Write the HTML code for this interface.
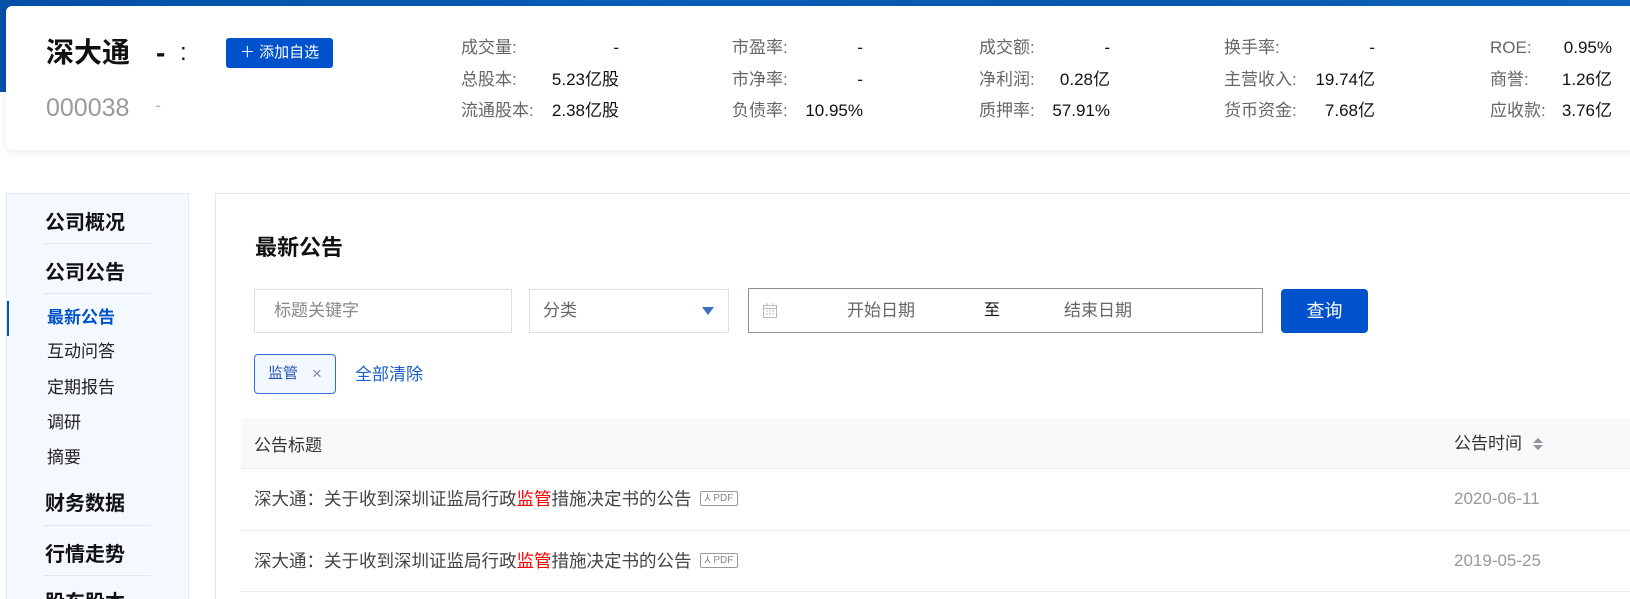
<!DOCTYPE html>
<html><head><meta charset="utf-8"><style>
*{margin:0;padding:0;box-sizing:border-box}
html,body{width:1630px;height:599px;overflow:hidden;background:#fff}
body{font-family:"Liberation Sans","Noto Sans CJK SC",sans-serif}
#w{position:relative;width:1630px;height:599px;overflow:hidden}
.a{position:absolute;white-space:nowrap}
.banner{left:0;top:0;width:1630px;height:92px;background:linear-gradient(90deg,#0550a8,#0a5cb8 40%,#0a58b0 70%,#0e62bd)}
.card{left:6px;top:6px;width:1640px;height:144px;background:#fff;border-radius:6px;box-shadow:0 2px 8px rgba(0,0,0,.08)}
.lb{font-size:17px;color:#666;line-height:20px}
.vl{font-size:17px;color:#111;line-height:20px;text-align:right}
.side{left:6px;top:193px;width:183px;height:420px;background:#f4f8ff;border:1px solid #e4e8ef}
.h{font-size:20px;font-weight:bold;color:#111;left:45px;line-height:24px}
.sep{left:44px;width:107px;height:1px;background:#e3e6ec}
.s{font-size:17px;color:#222;left:47px;line-height:20px}
.panel{left:215px;top:193px;width:1420px;height:420px;border:1px solid #e6e6e6;background:#fff}
.box{border:1px solid #dcdfe6;background:#fff}
.row{font-size:17.5px;color:#444;left:254px;line-height:22px}
.date{font-size:17px;color:#999;left:1454px;line-height:20px}
.pdf{display:inline-block;vertical-align:middle;margin-left:8px;border:1px solid #999;border-radius:2px;font-size:10px;color:#888;line-height:13px;padding:0 4px;height:15px;position:relative;top:-2px}
.line{left:241px;width:1389px;height:1px;background:#ebebf0}
</style></head><body><div id="w">
<div class="a banner"></div>
<div class="a card"></div>
<div class="a" style="left:46px;top:36px;font-size:28px;font-weight:bold;color:#111;line-height:34px">深大通</div>
<div class="a" style="left:156px;top:36px;font-size:28px;font-weight:bold;color:#111;line-height:34px">-</div>
<div class="a" style="left:180px;top:38px;font-size:24px;color:#111;line-height:30px">:</div>
<div class="a" style="left:46px;top:93px;font-size:25px;color:#9a9a9a;line-height:30px">000038</div>
<div class="a" style="left:155px;top:95px;font-size:18px;color:#bbb">-</div>
<div class="a" style="left:226px;top:38px;width:107px;height:30px;background:#0052cc;border-radius:3px;color:#fff;font-size:15px;line-height:30px;text-align:center">＋ 添加自选</div>

<div class="a lb" style="left:461px;top:38px">成交量:</div><div class="a vl" style="left:540px;width:79px;top:38px">-</div>
<div class="a lb" style="left:461px;top:70px">总股本:</div><div class="a vl" style="left:520px;width:99px;top:70px">5.23亿股</div>
<div class="a lb" style="left:461px;top:101px">流通股本:</div><div class="a vl" style="left:520px;width:99px;top:101px">2.38亿股</div>

<div class="a lb" style="left:732px;top:38px">市盈率:</div><div class="a vl" style="left:800px;width:63px;top:38px">-</div>
<div class="a lb" style="left:732px;top:70px">市净率:</div><div class="a vl" style="left:800px;width:63px;top:70px">-</div>
<div class="a lb" style="left:732px;top:101px">负债率:</div><div class="a vl" style="left:780px;width:83px;top:101px">10.95%</div>

<div class="a lb" style="left:979px;top:38px">成交额:</div><div class="a vl" style="left:1040px;width:70px;top:38px">-</div>
<div class="a lb" style="left:979px;top:70px">净利润:</div><div class="a vl" style="left:1040px;width:70px;top:70px">0.28亿</div>
<div class="a lb" style="left:979px;top:101px">质押率:</div><div class="a vl" style="left:1030px;width:80px;top:101px">57.91%</div>

<div class="a lb" style="left:1224px;top:38px">换手率:</div><div class="a vl" style="left:1300px;width:75px;top:38px">-</div>
<div class="a lb" style="left:1224px;top:70px">主营收入:</div><div class="a vl" style="left:1300px;width:75px;top:70px">19.74亿</div>
<div class="a lb" style="left:1224px;top:101px">货币资金:</div><div class="a vl" style="left:1300px;width:75px;top:101px">7.68亿</div>

<div class="a lb" style="left:1490px;top:38px">ROE:</div><div class="a vl" style="left:1550px;width:62px;top:38px">0.95%</div>
<div class="a lb" style="left:1490px;top:70px">商誉:</div><div class="a vl" style="left:1550px;width:62px;top:70px">1.26亿</div>
<div class="a lb" style="left:1490px;top:101px">应收款:</div><div class="a vl" style="left:1550px;width:62px;top:101px">3.76亿</div>

<div class="a side"></div>
<div class="a h" style="top:211px">公司概况</div><div class="a sep" style="top:243px"></div>
<div class="a h" style="top:261px">公司公告</div><div class="a sep" style="top:293px"></div>
<div class="a" style="left:7px;top:301px;width:2px;height:35px;background:#0052cc"></div>
<div class="a s" style="top:308px;color:#0052cc;font-weight:bold">最新公告</div>
<div class="a s" style="top:342px">互动问答</div>
<div class="a s" style="top:378px">定期报告</div>
<div class="a s" style="top:413px">调研</div>
<div class="a s" style="top:448px">摘要</div>
<div class="a h" style="top:492px">财务数据</div><div class="a sep" style="top:525px"></div>
<div class="a h" style="top:543px">行情走势</div><div class="a sep" style="top:575px"></div>
<div class="a h" style="top:591px">股东股本</div>

<div class="a panel"></div>
<div class="a" style="left:255px;top:235px;font-size:22px;font-weight:bold;color:#111;line-height:26px">最新公告</div>
<div class="a box" style="left:254px;top:289px;width:258px;height:44px"></div>
<div class="a" style="left:274px;top:300px;font-size:17px;color:#888;line-height:22px">标题关键字</div>
<div class="a box" style="left:529px;top:289px;width:200px;height:44px"></div>
<div class="a" style="left:543px;top:300px;font-size:17px;color:#666;line-height:22px">分类</div>
<div class="a" style="left:702px;top:307px;width:0;height:0;border-left:6px solid transparent;border-right:6px solid transparent;border-top:8px solid #3b6fc4"></div>
<div class="a" style="left:748px;top:288px;width:515px;height:45px;border:1px solid #8a9099"></div>
<svg class="a" style="left:762px;top:302px" width="16" height="17" viewBox="0 0 16 17"><rect x="1.5" y="3.5" width="13" height="12" fill="none" stroke="#b9b9b9"/><line x1="1.5" y1="6.5" x2="14.5" y2="6.5" stroke="#b9b9b9"/><line x1="5" y1="1" x2="5" y2="4" stroke="#b9b9b9"/><line x1="11" y1="1" x2="11" y2="4" stroke="#b9b9b9"/><path d="M4 9h2M7 9h2M10 9h2M4 12h2M7 12h2M10 12h2" stroke="#bbb"/></svg>
<div class="a" style="left:847px;top:300px;font-size:17px;color:#666;line-height:22px">开始日期</div>
<div class="a" style="left:984px;top:300px;font-size:16px;color:#111;line-height:22px">至</div>
<div class="a" style="left:1064px;top:300px;font-size:17px;color:#666;line-height:22px">结束日期</div>
<div class="a" style="left:1281px;top:289px;width:87px;height:44px;background:#0052cc;border-radius:4px;color:#fff;font-size:18px;line-height:44px;text-align:center">查询</div>

<div class="a" style="left:254px;top:354px;width:82px;height:40px;border:1px solid #2f6fd6;border-radius:4px;background:#f3f7ff"></div>
<div class="a" style="left:268px;top:364px;font-size:15px;color:#2055b8;line-height:20px">监管</div>
<div class="a" style="left:312px;top:364px;font-size:17px;color:#7a8aa8;line-height:20px">×</div>
<div class="a" style="left:355px;top:364px;font-size:17px;color:#1a5fcc;line-height:22px">全部清除</div>

<div class="a" style="left:241px;top:418px;width:1389px;height:50px;background:#f9f9fa"></div>
<div class="a line" style="top:468px"></div>
<div class="a" style="left:254px;top:435px;font-size:17px;color:#333;line-height:22px">公告标题</div>
<div class="a" style="left:1454px;top:433px;font-size:17px;color:#333;line-height:22px">公告时间</div>
<svg class="a" style="left:1532px;top:437px" width="12" height="14" viewBox="0 0 12 14"><path d="M6 1L11 6H1z M6 13L11 8H1z" fill="#8e939b"/></svg>

<div class="a row" style="top:488px">深大通：关于收到深圳证监局行政<span style="color:#f00">监管</span>措施决定书的公告<span class="pdf">⅄ PDF</span></div>
<div class="a date" style="top:489px">2020-06-11</div>
<div class="a line" style="top:530px"></div>
<div class="a row" style="top:550px">深大通：关于收到深圳证监局行政<span style="color:#f00">监管</span>措施决定书的公告<span class="pdf">⅄ PDF</span></div>
<div class="a date" style="top:551px">2019-05-25</div>
<div class="a line" style="top:591px"></div>
</div></body></html>
